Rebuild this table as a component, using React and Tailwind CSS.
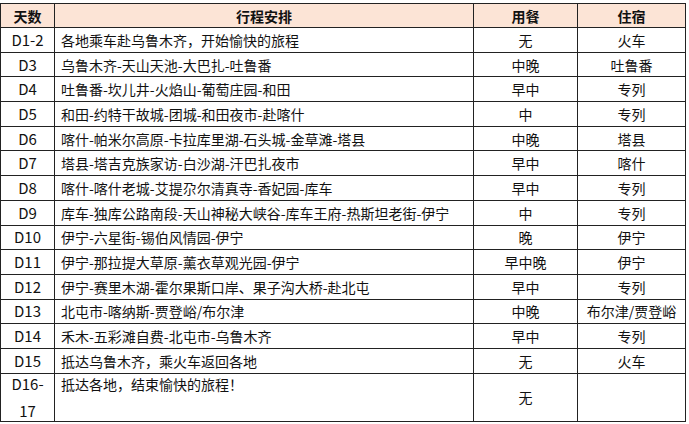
import React from "react";

const rows = [
  ["D1-2", "各地乘车赴乌鲁木齐，开始愉快的旅程", "无", "火车"],
  ["D3", "乌鲁木齐-天山天池-大巴扎-吐鲁番", "中晚", "吐鲁番"],
  ["D4", "吐鲁番-坎儿井-火焰山-葡萄庄园-和田", "早中", "专列"],
  ["D5", "和田-约特干故城-团城-和田夜市-赴喀什", "中", "专列"],
  ["D6", "喀什-帕米尔高原-卡拉库里湖-石头城-金草滩-塔县", "中晚", "塔县"],
  ["D7", "塔县-塔吉克族家访-白沙湖-汗巴扎夜市", "早中", "喀什"],
  ["D8", "喀什-喀什老城-艾提尕尔清真寺-香妃园-库车", "早中", "专列"],
  ["D9", "库车-独库公路南段-天山神秘大峡谷-库车王府-热斯坦老街-伊宁", "中", "专列"],
  ["D10", "伊宁-六星街-锡伯风情园-伊宁", "晚", "伊宁"],
  ["D11", "伊宁-那拉提大草原-薰衣草观光园-伊宁", "早中晚", "伊宁"],
  ["D12", "伊宁-赛里木湖-霍尔果斯口岸、果子沟大桥-赴北屯", "早中", "专列"],
  ["D13", "北屯市-喀纳斯-贾登峪/布尔津", "中晚", "布尔津/贾登峪"],
  ["D14", "禾木-五彩滩自费-北屯市-乌鲁木齐", "早中", "专列"],
  ["D15", "抵达乌鲁木齐，乘火车返回各地", "无", "火车"],
];

const font = { fontFamily: '"Noto Sans CJK SC", "Noto Sans", sans-serif' };

export default function App() {
  return (
    <div className="w-[689px] h-[424px] bg-white pt-[3px]" style={font}>
      <table className="border-collapse table-fixed w-[685px] text-[14px] leading-[20px] text-[#111]">
        <colgroup>
          <col className="w-[54px]" />
          <col className="w-[419px]" />
          <col className="w-[104px]" />
          <col className="w-[108px]" />
        </colgroup>
        <thead>
          <tr className="h-[24px] bg-[#fce4d6]">
            <th className="border border-[#222] font-bold text-center p-0">天数</th>
            <th className="border border-[#222] font-bold text-center p-0">行程安排</th>
            <th className="border border-[#222] font-bold text-center p-0">用餐</th>
            <th className="border border-[#222] font-bold text-center p-0">住宿</th>
          </tr>
        </thead>
        <tbody>
          {rows.map((r) => (
            <tr key={r[0]} className="h-[24.7px]">
              <td className="border border-[#222] text-center p-0 text-[15px]">{r[0]}</td>
              <td className="border border-[#222] text-left px-[6px] py-0 whitespace-nowrap">{r[1]}</td>
              <td className="border border-[#222] text-center p-0">{r[2]}</td>
              <td className="border border-[#222] text-center p-0">{r[3]}</td>
            </tr>
          ))}
          <tr className="h-[48px]">
            <td className="border border-[#222] text-center p-0 align-top text-[15px]">
              <div className="flex flex-col items-center leading-[20px] gap-[7px]">
                <span>D16-</span>
                <span>17</span>
              </div>
            </td>
            <td className="border border-[#222] text-left align-top px-[6px] pt-0">抵达各地，结束愉快的旅程！</td>
            <td className="border border-[#222] text-center p-0">无</td>
            <td className="border border-[#222] text-center p-0"></td>
          </tr>
        </tbody>
      </table>
    </div>
  );
}
